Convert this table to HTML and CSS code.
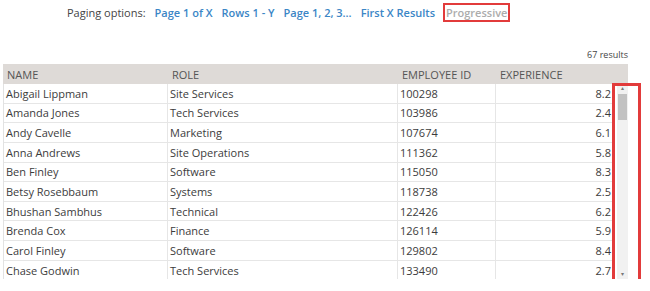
FILE: index.html
```html
<!DOCTYPE html>
<html lang="en">
  <head>
    <meta charset="UTF-8" />
    <meta name="viewport" content="width=device-width, initial-scale=1.0" />
    <title>Paging Options</title>
    <link rel="stylesheet" href="styles.css">
  </head>
  <body>
    <div class="paging">
      <span class="paging__label">Paging options:</span>
      <a class="paging__link" href="#">Page 1 of X</a>
      <a class="paging__link" href="#">Rows 1 - Y</a>
      <a class="paging__link" href="#">Page 1, 2, 3...</a>
      <a class="paging__link" href="#">First X Results</a>
      <a class="paging__link paging__link--active" href="#">Progressive</a>
    </div>

    <div class="count">67 results</div>

    <div class="grid">
      <div class="grid__head">
        <div class="grid__th">NAME</div>
        <div class="grid__th">ROLE</div>
        <div class="grid__th">EMPLOYEE ID</div>
        <div class="grid__th">EXPERIENCE</div>
      </div>
      <div class="grid__body">
        <div class="grid__rows">
          <div class="grid__row"><div class="grid__td">Abigail Lippman</div><div class="grid__td">Site Services</div><div class="grid__td">100298</div><div class="grid__td grid__td--num">8.2</div></div>
          <div class="grid__row"><div class="grid__td">Amanda Jones</div><div class="grid__td">Tech Services</div><div class="grid__td">103986</div><div class="grid__td grid__td--num">2.4</div></div>
          <div class="grid__row"><div class="grid__td">Andy Cavelle</div><div class="grid__td">Marketing</div><div class="grid__td">107674</div><div class="grid__td grid__td--num">6.1</div></div>
          <div class="grid__row"><div class="grid__td">Anna Andrews</div><div class="grid__td">Site Operations</div><div class="grid__td">111362</div><div class="grid__td grid__td--num">5.8</div></div>
          <div class="grid__row"><div class="grid__td">Ben Finley</div><div class="grid__td">Software</div><div class="grid__td">115050</div><div class="grid__td grid__td--num">8.3</div></div>
          <div class="grid__row"><div class="grid__td">Betsy Rosebbaum</div><div class="grid__td">Systems</div><div class="grid__td">118738</div><div class="grid__td grid__td--num">2.5</div></div>
          <div class="grid__row"><div class="grid__td">Bhushan Sambhus</div><div class="grid__td">Technical</div><div class="grid__td">122426</div><div class="grid__td grid__td--num">6.2</div></div>
          <div class="grid__row"><div class="grid__td">Brenda Cox</div><div class="grid__td">Finance</div><div class="grid__td">126114</div><div class="grid__td grid__td--num">5.9</div></div>
          <div class="grid__row"><div class="grid__td">Carol Finley</div><div class="grid__td">Software</div><div class="grid__td">129802</div><div class="grid__td grid__td--num">8.4</div></div>
          <div class="grid__row"><div class="grid__td">Chase Godwin</div><div class="grid__td">Tech Services</div><div class="grid__td">133490</div><div class="grid__td grid__td--num">2.7</div></div>
        </div>
        <div class="scrollbar">
          <div class="scrollbar__arrow">&#9652;</div>
          <div class="scrollbar__track"><div class="scrollbar__thumb"></div></div>
          <div class="scrollbar__arrow">&#9662;</div>
        </div>
        <div class="highlight"></div>
      </div>
    </div>
  </body>
</html>
```

FILE: styles.css
```css
* {
  box-sizing: border-box;
}

body {
  margin: 0;
  background: #fff;
  color: #3c3c3c;
  font-family: 'Open Sans', 'Noto Sans', sans-serif;
  font-size: 11px;
}

.paging {
  display: flex;
  align-items: center;
  gap: 9px;
  height: 24px;
  padding-left: 67px;
  line-height: 15px;
}

.paging__label {
  color: #444;
}

.paging__link {
  color: #3b86c6;
  font-weight: 600;
  text-decoration: none;
}

.paging__link--active {
  color: #acacac;
  border: 2px solid #e23b3b;
  padding: 0 1px;
  margin-left: -1px;
}

.count {
  margin-top: 25px;
  padding-right: 22px;
  text-align: right;
  font-size: 9px;
  line-height: 12px;
  color: #444;
}

.grid {
  width: 625px;
  margin: 3px 0 0 3px;
}

.grid__head {
  display: grid;
  grid-template-columns: 165px 230px 98px 1fr;
  height: 20px;
  align-items: center;
  background: #dedad7;
  color: #555;
}

.grid__th {
  padding-left: 4px;
}

.grid__body {
  position: relative;
  display: flex;
  height: 195px;
}

.grid__rows {
  width: 611px;
  overflow: hidden;
  border-left: 1px solid #e2e2e2;
}

.grid__row {
  display: grid;
  grid-template-columns: 164px 230px 98px 1fr;
  height: 19.65px;
  border-bottom: 1px solid #e6e6e6;
}

.grid__td {
  display: flex;
  align-items: center;
  padding-left: 2px;
  border-right: 1px solid #e6e6e6;
  white-space: nowrap;
}

.grid__td:last-child {
  border-right: none;
}

.grid__td--num {
  justify-content: flex-end;
  padding-right: 3px;
}

.scrollbar {
  display: flex;
  flex-direction: column;
  width: 11px;
  margin-left: 3px;
  background: #f1f1f1;
  color: #777;
}

.scrollbar__arrow {
  height: 9px;
  font-size: 6px;
  line-height: 9px;
  text-align: center;
}

.scrollbar__track {
  flex: 1;
  padding: 1px;
}

.scrollbar__thumb {
  height: 26px;
  background: #c2c2c2;
}

.highlight {
  position: absolute;
  left: 609px;
  top: -1px;
  width: 29px;
  height: 202px;
  border: 3px solid #e23b3b;
}
```
